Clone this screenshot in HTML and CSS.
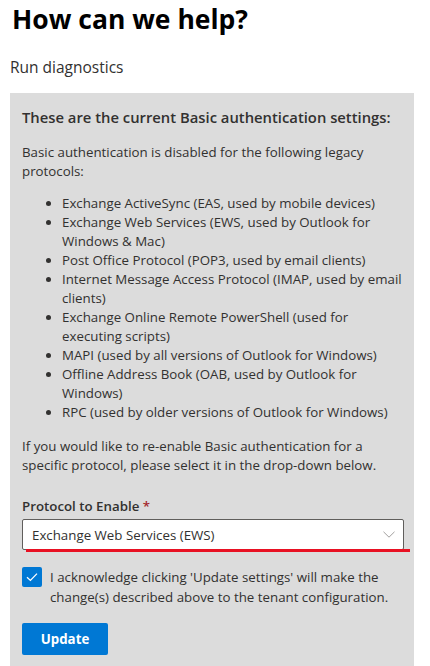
FILE: index.html
```html
<!DOCTYPE html>
<html lang="en">

<head>
    <meta charset="UTF-8">
    <meta name="viewport" content="width=device-width, initial-scale=1.0">
    <title>How can we help?</title>
    <link rel="stylesheet" href="styles.css">
</head>

<body>
    <h1 class="title">How can we help?</h1>
    <div class="subtitle">Run diagnostics</div>
    <div class="panel">
        <h2 class="panel-title">These are the current Basic authentication settings:</h2>
        <p class="text first">Basic authentication is disabled for the following legacy protocols:</p>
        <ul class="protocols">
            <li>Exchange ActiveSync (EAS, used by mobile devices)</li>
            <li>Exchange Web Services (EWS, used by Outlook for Windows &amp; Mac)</li>
            <li>Post Office Protocol (POP3, used by email clients)</li>
            <li>Internet Message Access Protocol (IMAP, used by email clients)</li>
            <li>Exchange Online Remote PowerShell (used for executing scripts)</li>
            <li>MAPI (used by all versions of Outlook for Windows)</li>
            <li>Offline Address Book (OAB, used by Outlook for Windows)</li>
            <li>RPC (used by older versions of Outlook for Windows)</li>
        </ul>
        <p class="text">If you would like to re-enable Basic authentication for a specific protocol, please select it in the drop-down below.</p>
        <label class="field-label">Protocol to Enable <span class="required">*</span></label>
        <div class="dropdown">
            <span>Exchange Web Services (EWS)</span>
            <svg width="12" height="7" viewBox="0 0 12 7"><path d="M0.5 0.8l5.5 5.4 5.5-5.4" fill="none" stroke="#a19f9d" stroke-width="1"/></svg>
            <div class="mark"></div>
        </div>
        <div class="check-row">
            <span class="checkbox">
                <svg width="12" height="10" viewBox="0 0 12 10"><path d="M1 5.2l3.4 3.2L11 1.6" fill="none" stroke="#fff" stroke-width="1.3"/></svg>
            </span>
            <span class="check-text">I acknowledge clicking 'Update settings' will make the change(s) described above to the tenant configuration.</span>
        </div>
        <button class="btn">Update</button>
    </div>
</body>

</html>
```

FILE: styles.css
```css
* {
    padding: 0;
    margin: 0;
    box-sizing: border-box;
}

body {
    padding: 0 16px 0 10px;
    font-family: "Open Sans", "Noto Sans", sans-serif;
    color: #323130;
    background: #fff;
}

.title {
    font-size: 26.5px;
    font-weight: 700;
    color: #000;
    line-height: 36px;
    margin: 1px 0 0 2px;
}

.subtitle {
    font-size: 15.5px;
    line-height: 20px;
    margin-top: 20px;
}

.panel {
    margin-top: 16px;
    background: #dcdcdc;
    padding: 13px 10px 10px 12px;
    height: 600px;
}

.panel-title {
    font-size: 14.8px;
    font-weight: 600;
    line-height: 22px;
}

.text {
    font-size: 13.3px;
    line-height: 19px;
    margin-top: 15px;
}

.text.first {
    margin-top: 15px;
}

.protocols {
    margin: 13px 0 0 0;
    padding-left: 40px;
    font-size: 13.3px;
    line-height: 19px;
}

.field-label {
    display: block;
    font-size: 13.3px;
    font-weight: 600;
    line-height: 20px;
    margin-top: 21px;
}

.required {
    color: #a4262c;
}

.dropdown {
    position: relative;
    margin-top: 3px;
    height: 31px;
    border: 1px solid #605e5c;
    border-radius: 2px;
    background: #fff;
    display: flex;
    align-items: center;
    justify-content: space-between;
    padding: 0 8px 0 9px;
    font-size: 13.3px;
}

.mark {
    position: absolute;
    left: 3px;
    right: -7px;
    bottom: -3px;
    height: 3px;
    background: #e81123;
}

.check-row {
    display: flex;
    margin-top: 17px;
    gap: 8px;
}

.checkbox {
    flex: none;
    width: 20px;
    height: 20px;
    background: #0078d4;
    border-radius: 2px;
    display: flex;
    align-items: center;
    justify-content: center;
}

.check-text {
    font-size: 13.3px;
    line-height: 20px;
}

.btn {
    margin-top: 16px;
    height: 32px;
    width: 86px;
    border: none;
    border-radius: 2px;
    background: #0078d4;
    color: #fff;
    font-family: inherit;
    font-size: 13.3px;
    font-weight: 700;
}
```
